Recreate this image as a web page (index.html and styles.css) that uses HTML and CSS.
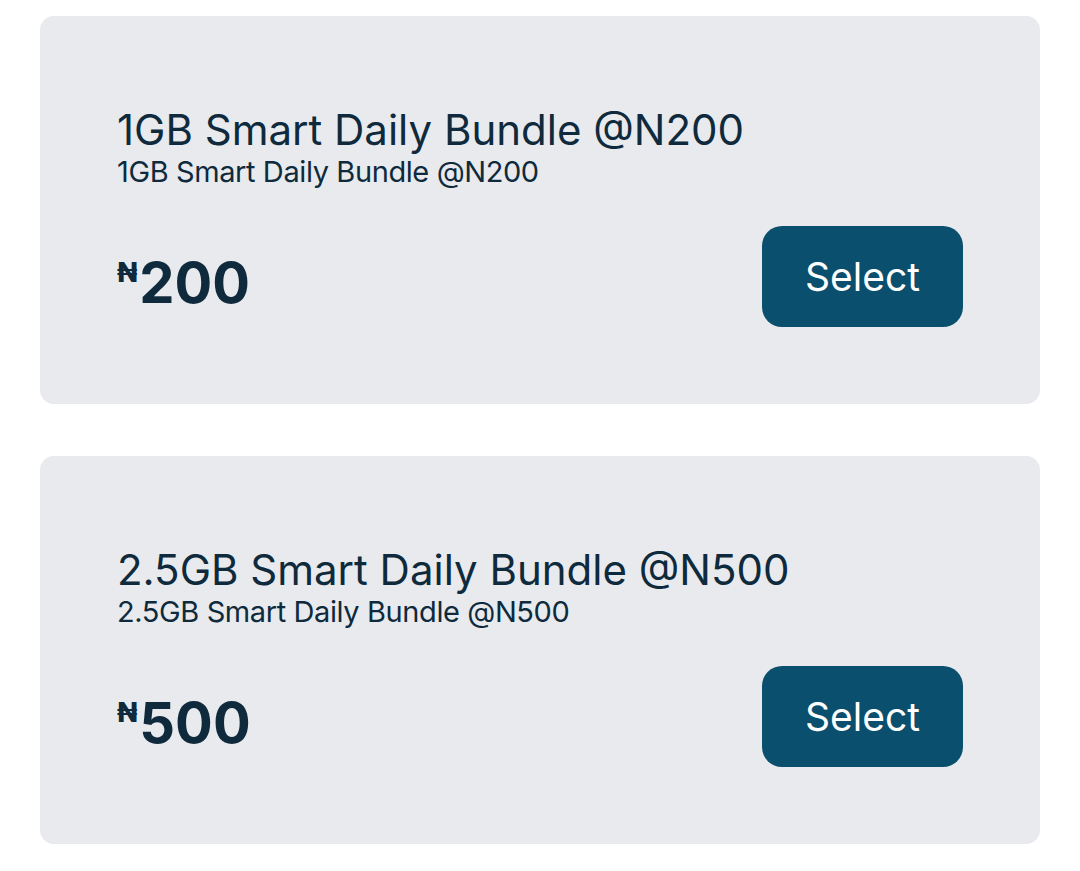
FILE: index.html
```html
<!DOCTYPE html>
<html>
<head>
<meta charset="utf-8">
<link rel="stylesheet" href="styles.css">
</head>
<body>
<div class="list">
  <div class="card">
    <div class="title">1GB Smart Daily Bundle @N200</div>
    <div class="subtitle">1GB Smart Daily Bundle @N200</div>
    <div class="row">
      <div class="price"><span class="cur">₦</span>200</div>
      <button class="btn">Select</button>
    </div>
  </div>
  <div class="card">
    <div class="title">2.5GB Smart Daily Bundle @N500</div>
    <div class="subtitle">2.5GB Smart Daily Bundle @N500</div>
    <div class="row">
      <div class="price"><span class="cur">₦</span>500</div>
      <button class="btn">Select</button>
    </div>
  </div>
</div>
</body>
</html>
```
FILE: styles.css
```css
* { box-sizing: border-box; }
body {
  margin: 0;
  background: #ffffff;
  font-family: Inter, "Noto Sans", sans-serif;
  color: #0f2a3c;
}
.list {
  padding: 16px 40px 0 40px;
  display: flex;
  flex-direction: column;
  gap: 52px;
}
.card {
  background: #e8eaee;
  border-radius: 14px;
  height: 388px;
  padding: 90px 77px 0 77px;
}
.title {
  font-size: 42px;
  line-height: 48px;
  font-weight: 400;
  letter-spacing: 0;
}
.subtitle {
  font-size: 29px;
  line-height: 34px;
  letter-spacing: -0.4px;
  margin-top: 1px;
}
.row {
  display: flex;
  justify-content: space-between;
  align-items: center;
  margin-top: 37px;
}
.price {
  font-size: 56px;
  font-weight: 700;
  line-height: 1;
  display: flex;
  align-items: flex-start;
  padding-top: 13px;
}
.cur {
  font-size: 27px;
  font-weight: 800;
  margin-right: 2px;
  margin-top: 4px;
}
.btn {
  width: 201px;
  height: 101px;
  border: none;
  border-radius: 20px;
  background: #0b4f6e;
  color: #ffffff;
  font-family: Inter, "Noto Sans", sans-serif;
  font-size: 39px;
  font-weight: 400;
}
```
